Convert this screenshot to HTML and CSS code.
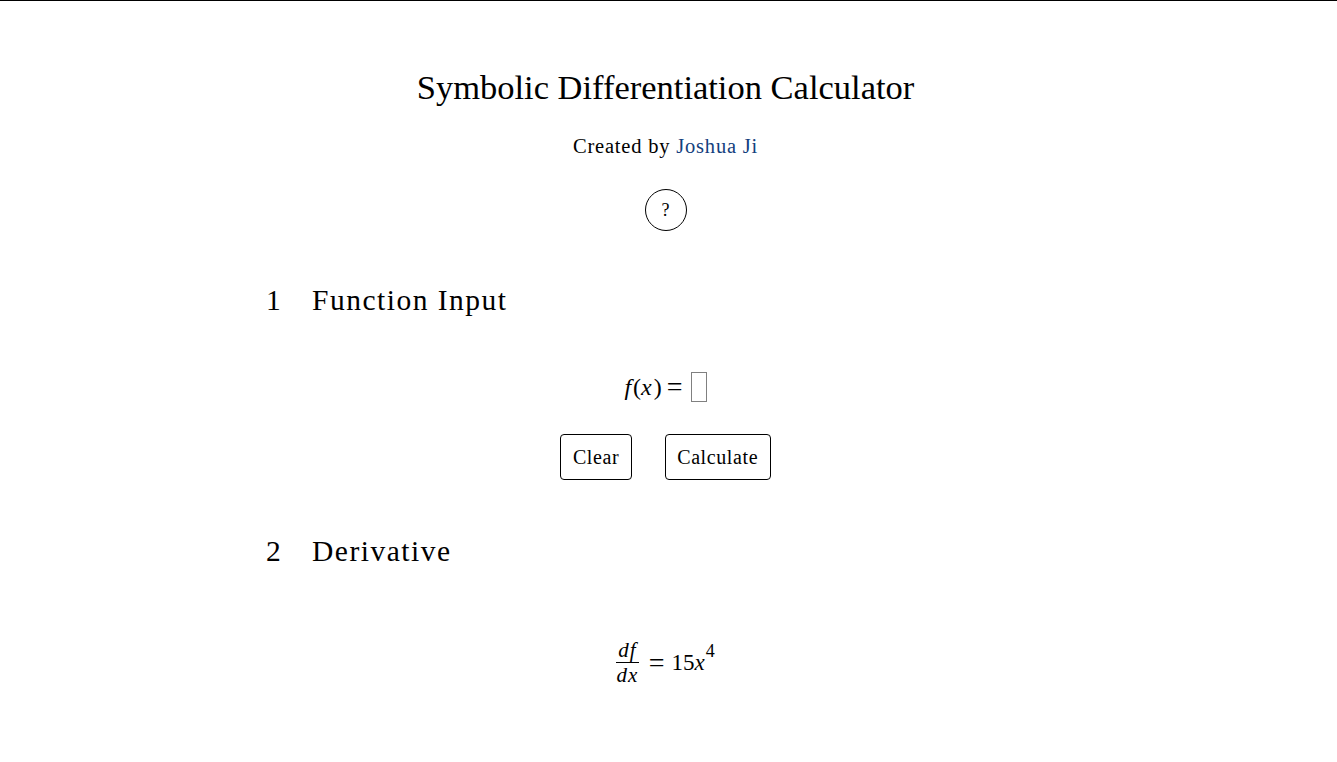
FILE: index.html
```html
<!DOCTYPE html>
<html lang="en">
<head>
<meta charset="utf-8">
<title>Symbolic Differentiation Calculator</title>
<link rel="stylesheet" href="styles.css">
</head>
<body>
<main class="page">
  <header class="header">
    <h1 class="title">Symbolic Differentiation Calculator</h1>
    <p class="author">Created by <a class="author-link" href="#">Joshua Ji</a></p>
    <div class="help-row"><button class="help-btn">?</button></div>
  </header>

  <section class="section">
    <h2 class="section-title"><span class="section-num">1</span>Function Input</h2>
    <div class="math-input">
      <span class="mi">f</span><span class="mo">(</span><span class="mi">x</span><span class="mo">)</span><span class="eq">=</span><span class="input-box"></span>
    </div>
    <div class="buttons">
      <button class="btn">Clear</button>
      <button class="btn">Calculate</button>
    </div>
  </section>

  <section class="section">
    <h2 class="section-title"><span class="section-num">2</span>Derivative</h2>
    <div class="result">
      <span class="frac">
        <span class="num">df</span>
        <span class="den">dx</span>
      </span>
      <span class="eq">=</span><span class="rhs">15<span class="mi">x</span><sup class="exp">4</sup></span>
    </div>
  </section>
</main>
</body>
</html>
```

FILE: styles.css
```css
html, body {
  margin: 0;
  padding: 0;
}
body {
  border-top: 1px solid #000;
  background: #fff;
  color: #000;
  font-family: "Liberation Serif", "Times New Roman", serif;
  font-size: 19px;
}
.page {
  max-width: 799px;
  margin: 0 auto;
  padding: 0 6px 60px 0;
}
.header {
  text-align: center;
}
.title {
  font-weight: normal;
  font-size: 34.5px;
  margin: 0;
  padding-top: 66px;
  line-height: 40px;
}
.author {
  margin: 27px 0 0;
  font-size: 20.5px;
  letter-spacing: 0.8px;
  line-height: 24px;
}
.author-link {
  color: #13407d;
  text-decoration: none;
}
.help-row {
  margin-top: 31px;
  display: flex;
  justify-content: center;
}
.help-btn {
  width: 42px;
  height: 42px;
  border-radius: 50%;
  border: 1px solid #000;
  background: #fff;
  font-family: inherit;
  font-size: 18px;
  padding: 0;
  color: #000;
}
.section {
  margin-top: 52px;
}
.section + .section {
  margin-top: 54px;
}
.section-title {
  font-weight: normal;
  font-size: 29.5px;
  letter-spacing: 1.5px;
  line-height: 34px;
  margin: 0;
  display: flex;
}
.section-num {
  width: 46px;
  letter-spacing: 0;
}
.math-input {
  margin-top: 54px;
  display: flex;
  justify-content: center;
  align-items: center;
  font-size: 24px;
  height: 32px;
}
.mi {
  font-style: italic;
}
.mi + .mo {
  margin-left: 2px;
}
.eq {
  font-size: 28px;
  margin: 0 8px 0 5px;
}
.input-box {
  display: inline-block;
  width: 16px;
  height: 30px;
  border: 1px solid #808080;
  box-sizing: border-box;
}
.buttons {
  margin-top: 31px;
  display: flex;
  justify-content: center;
  gap: 33px;
}
.btn {
  font-family: inherit;
  font-size: 20px;
  letter-spacing: 0.6px;
  height: 46px;
  padding: 0 11.5px;
  border: 1px solid #000;
  border-radius: 4px;
  background: #fff;
  color: #000;
}
.result {
  margin-top: 72px;
  display: flex;
  justify-content: center;
  align-items: center;
  font-size: 23px;
}
.frac {
  display: inline-flex;
  flex-direction: column;
  align-items: center;
  font-style: italic;
  font-size: 21px;
  letter-spacing: 1px;
  line-height: 20px;
  margin-right: 4px;
}
.num {
  border-bottom: 1px solid #000;
  padding: 0 2px 2px;
}
.den {
  padding-top: 2px;
}
.result .eq {
  margin: 0 7px 0 6px;
}
.exp {
  font-size: 18px;
  vertical-align: 13px;
  line-height: 0;
  margin-left: 1px;
}
```
